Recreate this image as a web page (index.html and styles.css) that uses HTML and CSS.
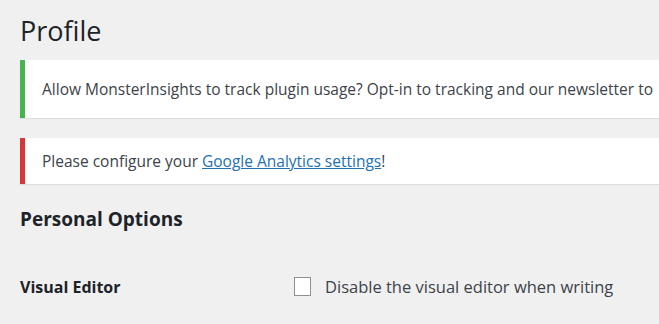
FILE: index.html
```html
<!DOCTYPE html>
<html lang="en">
<head>
    <meta charset="UTF-8">
    <title>Profile</title>
    <link rel="stylesheet" href="styles.css">
</head>
<body>
    <div class="wrap">
        <h1>Profile</h1>

        <!-- Notices -->
        <div class="notice notice-success">
            <p>Allow MonsterInsights to track plugin usage? Opt-in to tracking and our newsletter to</p>
        </div>
        <div class="notice notice-error">
            <p>Please configure your <a href="#">Google Analytics settings</a>!</p>
        </div>

        <h2>Personal Options</h2>

        <div class="form-row">
            <div class="form-label">Visual Editor</div>
            <label class="form-field">
                <input type="checkbox">
                Disable the visual editor when writing
            </label>
        </div>
    </div>
</body>
</html>
```

FILE: styles.css
```css
* { margin: 0; padding: 0; box-sizing: border-box; }
body { font-family: "Open Sans", sans-serif; background: #f0f0f1; color: #1d2327; overflow: hidden; }

.wrap { padding: 13px 0 0 20px; }
h1 { font-size: 27px; font-weight: 400; line-height: 36px; margin-bottom: 11px; }

/* Notices */
.notice { background: #fff; border-left: 5px solid #46b450; box-shadow: 0 1px 1px rgba(0,0,0,.08); white-space: nowrap; overflow: hidden; }
.notice p { font-size: 15.5px; color: #3c434a; padding: 0 0 0 17px; }
.notice-success { height: 58px; display: flex; align-items: center; margin-bottom: 20px; }
.notice-error { height: 46px; display: flex; align-items: center; border-left-color: #d63638; }
.notice a { color: #2271b1; }

h2 { font-size: 19px; font-weight: 700; margin: 22px 0 0; line-height: 26px; }

/* Form */
.form-row { display: flex; align-items: center; margin-top: 43px; }
.form-label { width: 274px; font-size: 16px; font-weight: 700; }
.form-field { display: flex; align-items: center; font-size: 16.5px; color: #3c434a; }
.form-field input { appearance: none; width: 17px; height: 19px; border: 1px solid #8c8f94; background: #fff; margin-right: 14px; }
```
